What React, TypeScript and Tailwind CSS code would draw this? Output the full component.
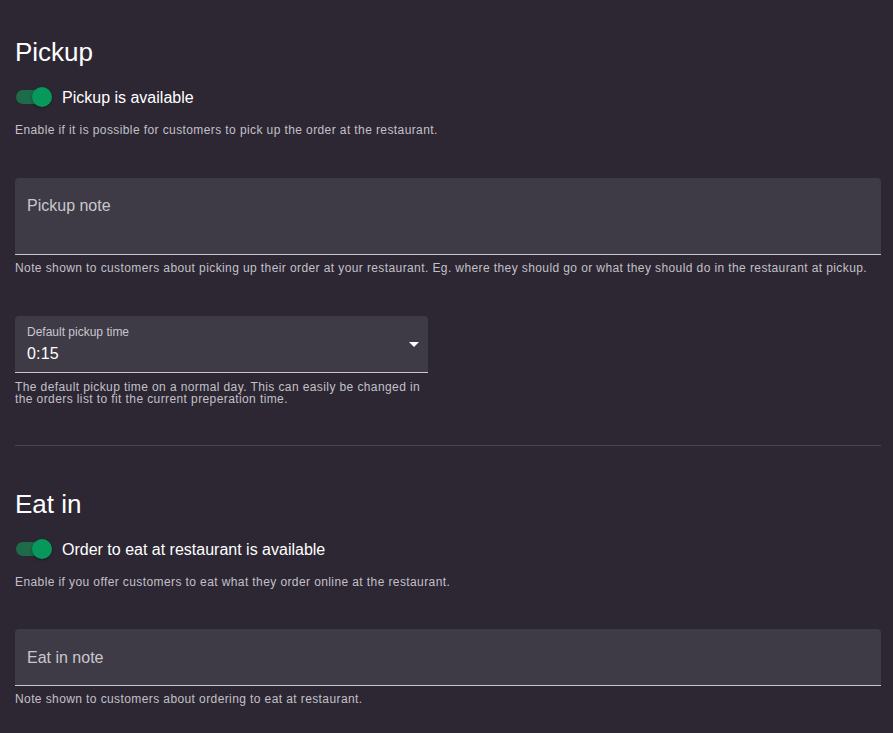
import React from "react";

function Toggle({ label }: { label: string }) {
  return (
    <div className="flex h-[38px] items-center">
      <div className="relative ml-px h-[38px] w-[37px]">
        <div className="absolute left-0 top-[12px] h-[14px] w-[34px] rounded-full bg-[#1d6b49]" />
        <div className="absolute left-[16px] top-[9px] h-[20px] w-[20px] rounded-full bg-[#07995b] shadow-[0_1px_3px_rgba(0,0,0,0.35)]" />
      </div>
      <span className="ml-[9px] text-[16px] leading-[19px] text-white">{label}</span>
    </div>
  );
}

function Helper({ children, className = "", tight }: { children: React.ReactNode; className?: string; tight?: boolean }) {
  return (
    <p className={`text-[12px] tracking-[0.4px] text-[#c3c0c8] ${tight ? "leading-[12px]" : "leading-[14px]"} ${className}`}>
      {children}
    </p>
  );
}

export default function App() {
  return (
    <div
      className="min-h-[733px] bg-[#2c2733] pl-[15px] pr-[12px] pt-[36px] pb-[20px]"
      style={{ fontFamily: '"Liberation Sans", Arial, sans-serif' }}
    >
      <h2 className="text-[26px] leading-[32px] text-white">Pickup</h2>
      <div className="mt-[10px]">
        <Toggle label="Pickup is available" />
      </div>
      <Helper className="mt-[7px]">
        Enable if it is possible for customers to pick up the order at the restaurant.
      </Helper>

      <div className="mt-[41px] h-[77px] rounded-t-[4px] border-b border-[#c9c7cd] bg-[#3e3b46] px-[12px] pt-[16px]">
        <span className="text-[16px] leading-[19px] text-[#c9c7cd]">Pickup note</span>
      </div>
      <Helper className="mt-[6px]">
        Note shown to customers about picking up their order at your restaurant. Eg. where they should go or what they
        should do in the restaurant at pickup.
      </Helper>

      <div className="relative mt-[41px] h-[57px] w-[413px] rounded-t-[4px] border-b border-[#c9c7cd] bg-[#3e3b46] px-[12px] pt-[9px]">
        <div className="text-[12px] leading-[14px] text-[#c9c7cd]">Default pickup time</div>
        <div className="mt-[5px] text-[16px] leading-[19px] tracking-[0.15px] text-white">0:15</div>
        <svg className="absolute right-[9px] top-[26px]" width="10" height="5" viewBox="0 0 10 5">
          <path d="M0 0 L10 0 L5 5 Z" fill="#ffffff" />
        </svg>
      </div>
      <Helper tight className="mt-[8px] w-[420px]">
        The default pickup time on a normal day. This can easily be changed in the orders list to fit the current
        preperation time.
      </Helper>

      <div className="mt-[40px] h-px bg-[#4a4552]" />

      <h2 className="mt-[42px] text-[26px] leading-[32px] text-white">Eat in</h2>
      <div className="mt-[10px]">
        <Toggle label="Order to eat at restaurant is available" />
      </div>
      <Helper className="mt-[7px]">
        Enable if you offer customers to eat what they order online at the restaurant.
      </Helper>

      <div className="mt-[40px] h-[57px] rounded-t-[4px] border-b border-[#c9c7cd] bg-[#3e3b46] px-[12px] pt-[17px]">
        <span className="text-[16px] leading-[19px] text-[#c9c7cd]">Eat in note</span>
      </div>
      <Helper className="mt-[6px]">Note shown to customers about ordering to eat at restaurant.</Helper>
    </div>
  );
}
